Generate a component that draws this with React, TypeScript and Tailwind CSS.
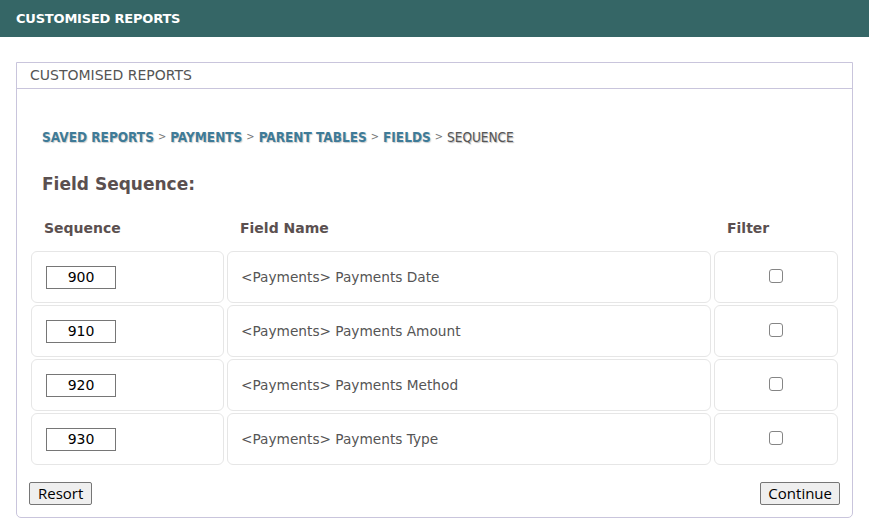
import React from "react";

const rows = [
  { seq: "900", name: "<Payments> Payments Date" },
  { seq: "910", name: "<Payments> Payments Amount" },
  { seq: "920", name: "<Payments> Payments Method" },
  { seq: "930", name: "<Payments> Payments Type" },
];

const crumbs = ["SAVED REPORTS", "PAYMENTS", "PARENT TABLES", "FIELDS"];

export default function App() {
  return (
    <div className="w-[869px] h-[530px] bg-white overflow-hidden" style={{ fontFamily: '"DejaVu Sans", Verdana, sans-serif' }}>
      <div className="h-[37px] bg-[#356666] flex items-center pl-[16px]">
        <span className="text-white font-bold text-[13px] tracking-[-0.2px]">CUSTOMISED REPORTS</span>
      </div>
      <div className="mt-[25px] ml-[16px] w-[837px] border border-[#c9c5dc] rounded-b-[5px]">
        <div className="h-[26px] border-b border-[#c9c5dc] flex items-center pl-[13px] text-[14px] text-[#555]">
          CUSTOMISED REPORTS
        </div>
        <div className="px-[14px]">
          <div
            className="mt-[38px] pl-[11px] h-[20px] flex items-center text-[13.5px] font-bold [font-stretch:condensed]"
            style={{ fontFamily: '"DejaVu Sans Condensed", "DejaVu Sans", sans-serif' }}
          >
            {crumbs.map((c) => (
              <React.Fragment key={c}>
                <span className="text-[#3e7b98] [text-shadow:1px_1px_1px_#ccc]">{c}</span>
                <span className="text-[#777] font-normal text-[11px] mx-[4px]">&gt;</span>
              </React.Fragment>
            ))}
            <span className="text-[#555] font-normal [text-shadow:1px_1px_1px_#bbb]">SEQUENCE</span>
          </div>
          <div className="mt-[26px] pl-[11px] h-[24px] flex items-center text-[17px] font-bold text-[#5b5050]">
            Field Sequence:
          </div>
          <div className="mt-[21px] grid grid-cols-[193px_484px_124px] gap-x-[3px] text-[14px] font-bold text-[#5b5050] h-[20px] items-center">
            <div className="pl-[13px]">Sequence</div>
            <div className="pl-[13px]">Field Name</div>
            <div className="pl-[13px]">Filter</div>
          </div>
          <div className="mt-[13px] flex flex-col gap-[2px]">
            {rows.map((r) => (
              <div key={r.seq} className="grid grid-cols-[193px_484px_124px] gap-x-[3px]">
                <div className="h-[52px] border border-[#e6e6e6] rounded-[6px] flex items-center pl-[14px]">
                  <input
                    readOnly
                    value={r.seq}
                    className="w-[70px] h-[23px] border border-[#767676] text-center text-[14px] text-black outline-none"
                    style={{ fontFamily: '"DejaVu Sans", Verdana, sans-serif' }}
                  />
                </div>
                <div className="h-[52px] border border-[#e6e6e6] rounded-[6px] flex items-center pl-[13px] text-[13.7px] text-[#555]">
                  {r.name}
                </div>
                <div className="h-[52px] border border-[#e6e6e6] rounded-[6px] flex items-center justify-center pb-[2px]">
                  <input
                    type="checkbox"
                    className="appearance-none w-[14px] h-[14px] m-0 border border-[#858585] rounded-[3px] bg-white"
                  />
                </div>
              </div>
            ))}
          </div>
          <div className="mt-[17px] mb-[12px] flex justify-between">
            <button
              className="-ml-[2px] h-[23px] px-[8px] border border-[#767676] rounded-[2px] bg-[#efefef] text-[15px] leading-none text-black"
              style={{ fontFamily: '"Open Sans", "Liberation Sans", sans-serif' }}
            >
              Resort
            </button>
            <button
              className="-mr-[2px] h-[23px] px-[7px] border border-[#767676] rounded-[2px] bg-[#efefef] text-[15px] leading-none text-black"
              style={{ fontFamily: '"Open Sans", "Liberation Sans", sans-serif' }}
            >
              Continue
            </button>
          </div>
        </div>
      </div>
    </div>
  );
}
